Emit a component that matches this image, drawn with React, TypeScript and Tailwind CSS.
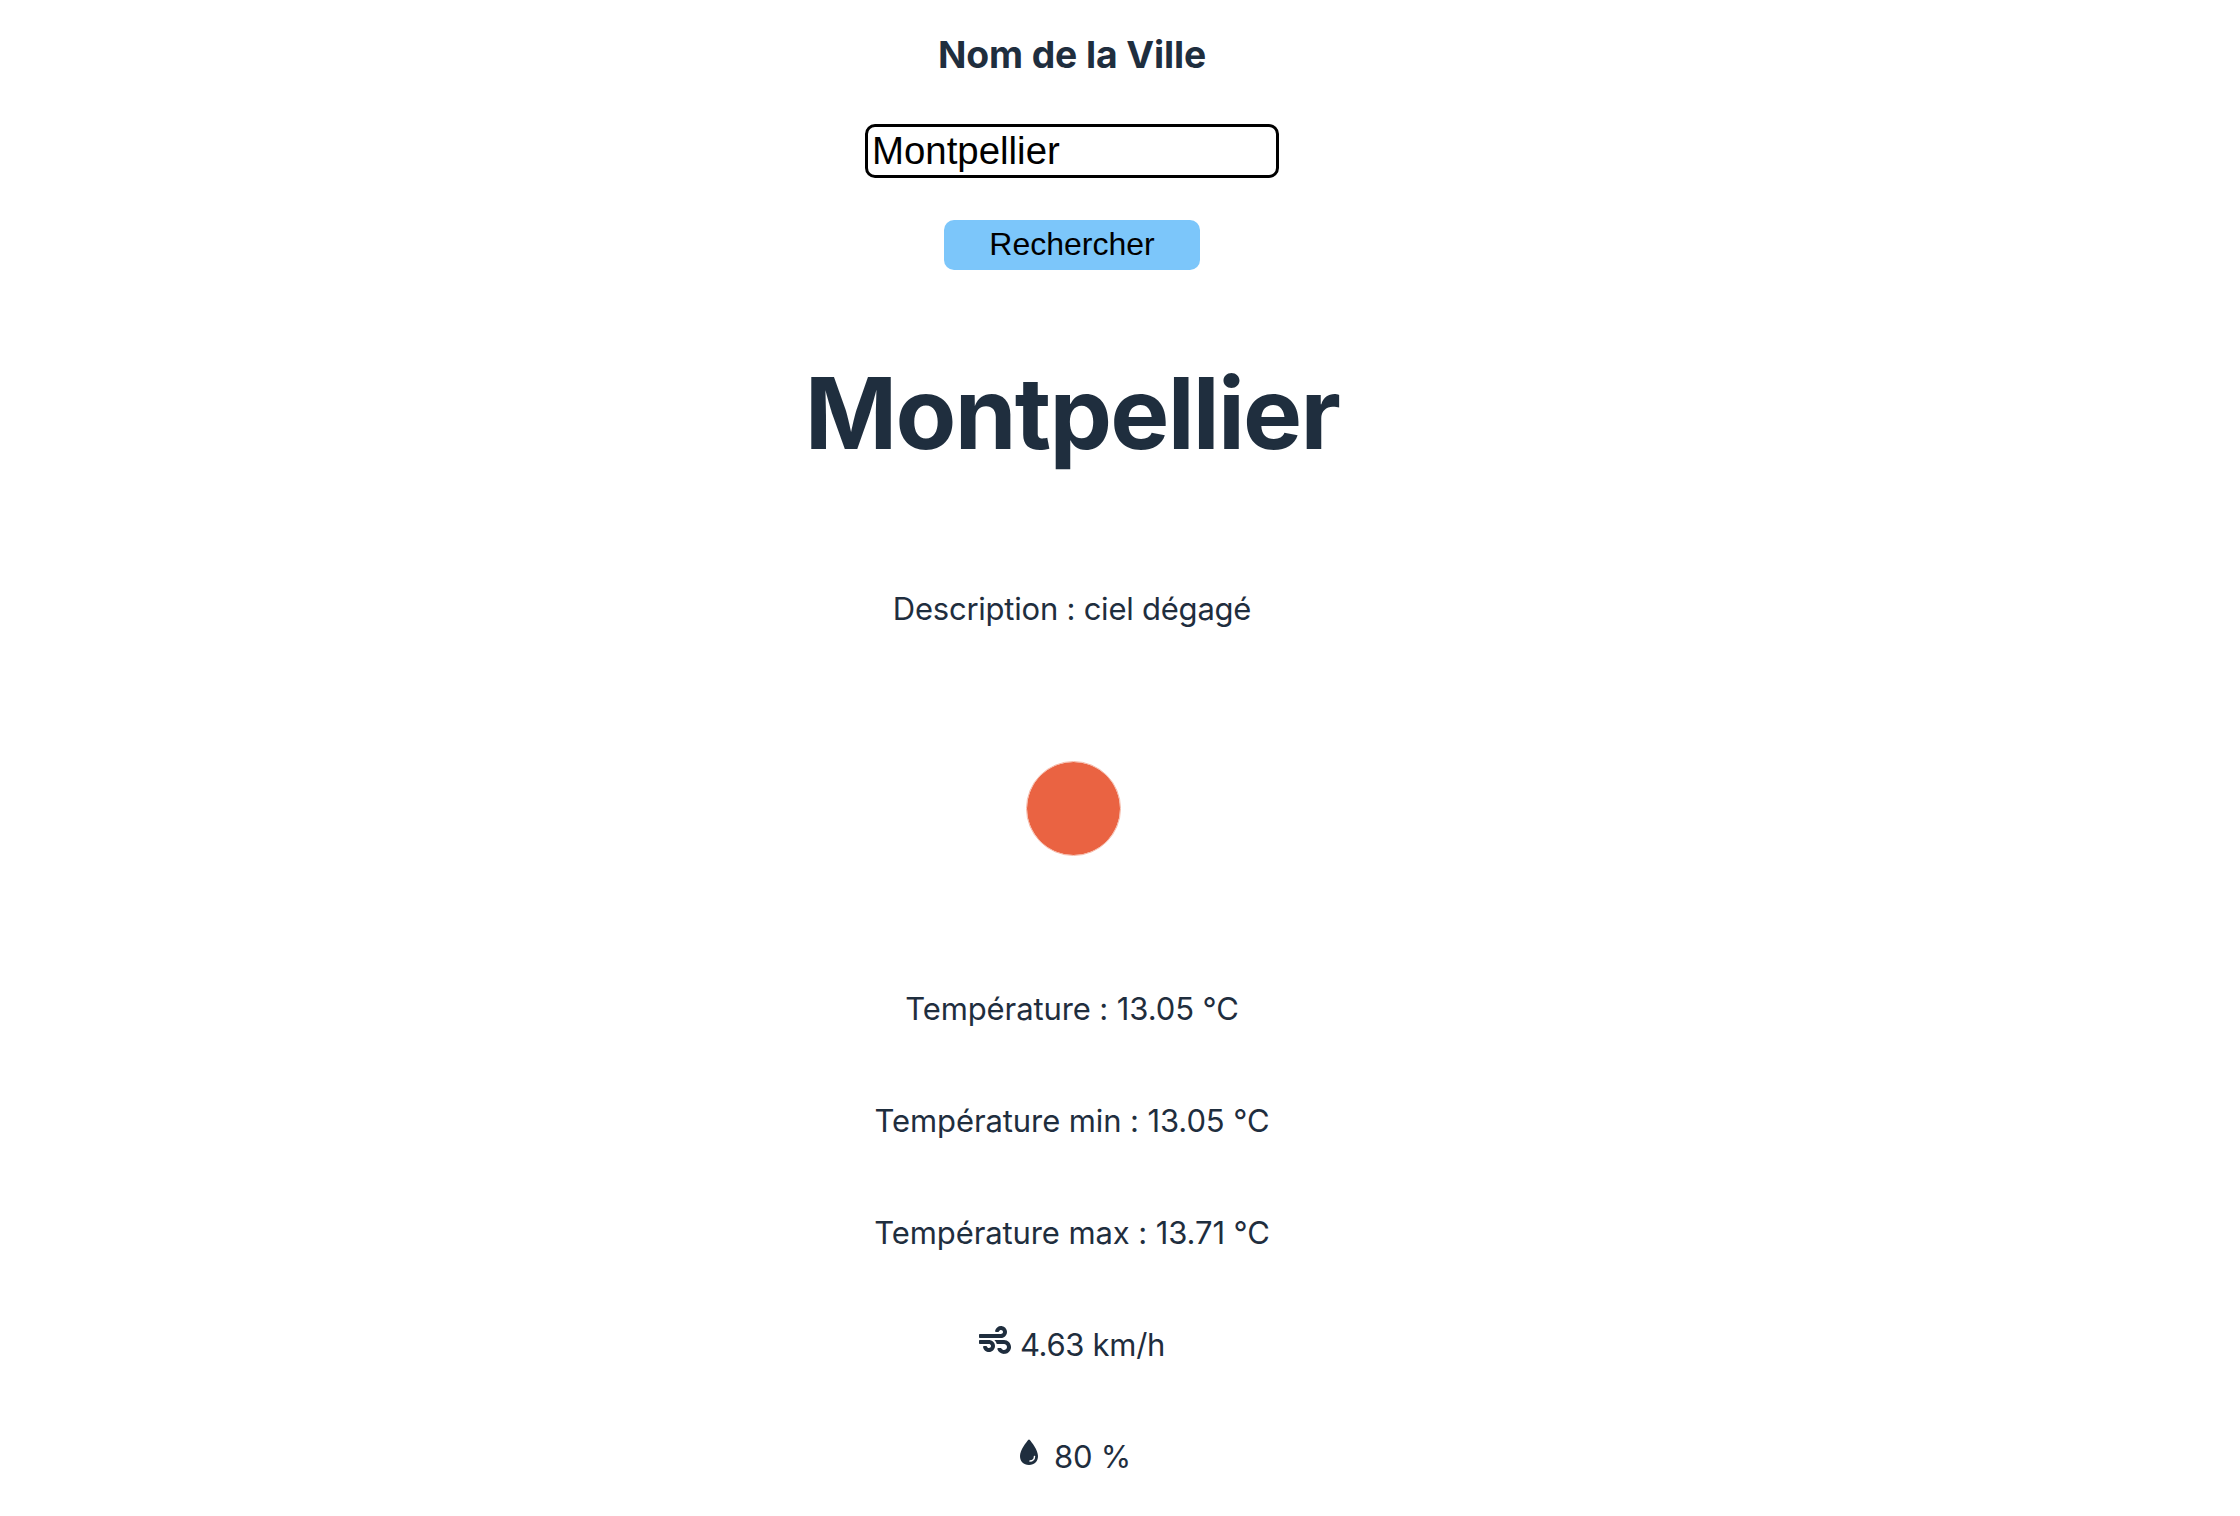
import { FaWind } from "react-icons/fa";
import { IoWater } from "react-icons/io5";

export default function App() {
  return (
    <main className="flex h-[1516px] w-[2144px] flex-col items-center overflow-hidden bg-white font-['Inter',sans-serif] text-[31px] leading-[48px] tracking-[-0.1px] text-[#1f2e3e]">
      <form className="flex flex-col items-center pt-[26px]">
        <label htmlFor="city" className="text-[37.3px] leading-[58px] font-bold tracking-[-0.1px]">
          Nom de la Ville
        </label>
        <input
          id="city"
          defaultValue="Montpellier"
          className="mt-[40px] h-[54px] w-[414px] rounded-[10px] border-3 border-black bg-white px-1 font-['Liberation_Sans',Arial,sans-serif] text-[38.4px] tracking-normal text-black outline-none"
        />
        <button type="button" className="mt-[42px] h-[50px] w-[256px] rounded-[10px] bg-[#7cc6fa] pb-0.5 font-['Liberation_Sans',Arial,sans-serif] text-[32px] leading-[48px] tracking-normal text-black">
          Rechercher
        </button>
      </form>
      <h1 className="mt-[87px] text-[99.3px] leading-[112px] font-bold tracking-[-1.75px]">Montpellier</h1>
      <p className="mt-[116px] tracking-[-0.23px]">Description : ciel dégagé</p>
      <div className="mt-[128px] ml-[2px] size-[95px] rounded-full border border-[#f6b9a8] bg-[#ea6342] bg-clip-padding" />
      <div className="mt-[129px] flex flex-col items-center gap-16">
        <p>Température : 13.05 °C</p>
        <p>Température min : 13.05 °C</p>
        <p>Température max : 13.71 °C</p>
        <p className="flex tracking-[-0.3px]">
          <FaWind className="mt-[3px] mr-[9px] size-8" />
          4.63 km/h
        </p>
        <p className="flex tracking-[-0.2px]">
          <IoWater className="mt-[3px] mr-[9px] size-8" />
          80 %
        </p>
      </div>
    </main>
  );
}
